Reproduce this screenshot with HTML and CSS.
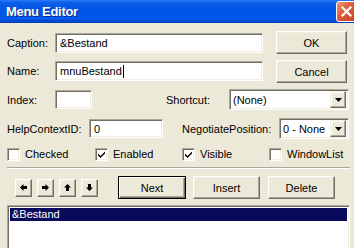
FILE: index.html
```html
<!DOCTYPE html>
<html lang="en">
<head>
    <meta charset="UTF-8">
    <title>Menu Editor</title>
    <link rel="stylesheet" href="styles.css">
</head>
<body>
    <div class="window">
        <div class="titlebar">
            <span class="title">Menu Editor</span>
            <span class="close">
                <svg width="11" height="11" viewBox="0 0 11 11"><path d="M1.5 1.5 L9.5 9.5 M9.5 1.5 L1.5 9.5" stroke="#fff" stroke-width="2.2" stroke-linecap="square"/></svg>
            </span>
        </div>

        <div class="content">
            <div class="top">
                <div class="fields">
                    <div class="row">
                        <label class="lbl w48">Caption:</label>
                        <div class="field caption">&amp;Bestand</div>
                    </div>
                    <div class="row">
                        <label class="lbl w48">Name:</label>
                        <div class="field caption">mnuBestand<span class="caret"></span></div>
                    </div>
                </div>
                <div class="side">
                    <div class="btn side-btn">OK</div>
                    <div class="btn side-btn">Cancel</div>
                </div>
            </div>

            <div class="row r3">
                <label class="lbl w48">Index:</label>
                <div class="field index"></div>
                <label class="lbl shortcut-lbl">Shortcut:</label>
                <div class="select shortcut">
                    <span class="sel-text">(None)</span>
                    <span class="drop">
                        <svg width="7" height="4" viewBox="0 0 7 4"><path d="M0 0 H7 L3.5 4 Z" fill="#000"/></svg>
                    </span>
                </div>
            </div>

            <div class="row r4">
                <label class="lbl help-lbl">HelpContextID:</label>
                <div class="field help">0</div>
                <label class="lbl nego-lbl">NegotiatePosition:</label>
                <div class="select nego">
                    <span class="sel-text">0 - None</span>
                    <span class="drop">
                        <svg width="7" height="4" viewBox="0 0 7 4"><path d="M0 0 H7 L3.5 4 Z" fill="#000"/></svg>
                    </span>
                </div>
            </div>

            <div class="checks">
                <div class="check"><span class="box"></span>Checked</div>
                <div class="check"><span class="box"><svg width="7" height="7" viewBox="0 0 7 7"><path d="M0 2.5 L2.5 5 L7 0.5 V2.5 L2.5 7 L0 4.5 Z" fill="#000"/></svg></span>Enabled</div>
                <div class="check"><span class="box"><svg width="7" height="7" viewBox="0 0 7 7"><path d="M0 2.5 L2.5 5 L7 0.5 V2.5 L2.5 7 L0 4.5 Z" fill="#000"/></svg></span>Visible</div>
                <div class="check"><span class="box"></span>WindowList</div>
            </div>

            <div class="separator"></div>

            <div class="actions">
                <div class="arrows">
                    <div class="btn arrow"><svg width="7" height="7" viewBox="0 0 7 7"><path d="M0 3.5 L3.5 0 V2 H7 V5 H3.5 V7 Z" fill="#000"/></svg></div>
                    <div class="btn arrow"><svg width="7" height="7" viewBox="0 0 7 7"><path d="M7 3.5 L3.5 0 V2 H0 V5 H3.5 V7 Z" fill="#000"/></svg></div>
                    <div class="btn arrow"><svg width="7" height="7" viewBox="0 0 7 7"><path d="M3.5 0 L0 3.5 H2 V7 H5 V3.5 H7 Z" fill="#000"/></svg></div>
                    <div class="btn arrow"><svg width="7" height="7" viewBox="0 0 7 7"><path d="M3.5 7 L0 3.5 H2 V0 H5 V3.5 H7 Z" fill="#000"/></svg></div>
                </div>
                <div class="btn default next">Next</div>
                <div class="btn insert">Insert</div>
                <div class="btn delete">Delete</div>
            </div>

            <div class="listbox">
                <div class="item selected">&amp;Bestand</div>
            </div>
        </div>
    </div>
</body>
</html>
```

FILE: styles.css
```css
body {
    margin: 0;
    font-family: "Liberation Sans", Arial, sans-serif;
    font-size: 11px;
    color: #000;
    background: #ece9d8;
}

.window {
    width: 354px;
    height: 248px;
    overflow: hidden;
    background: #ece9d8;
}

/* title bar */
.titlebar {
    height: 23px;
    display: flex;
    align-items: center;
    justify-content: space-between;
    overflow: hidden;
    background: linear-gradient(#2a7cf5 0, #0a5ee6 12%, #0054e3 45%, #0058ee 80%, #0048d0 92%, #003cb0 100%);
}

.title {
    margin-left: 6px;
    color: #fff;
    font-weight: bold;
    font-size: 13px;
    letter-spacing: -0.3px;
    text-shadow: 1px 1px #0a2a90;
}

.close {
    width: 19px;
    height: 19px;
    margin-right: -3px;
    border: 1px solid #fff;
    border-radius: 3px;
    display: flex;
    align-items: center;
    justify-content: center;
    background: linear-gradient(135deg, #ee9a80 0, #e0603a 40%, #c8401c 100%);
}

/* body */
.content {
    padding-left: 7px;
}

.top {
    display: flex;
    margin-top: 8px;
}

.fields {
    margin-top: 2px;
    display: flex;
    flex-direction: column;
    gap: 8px;
}

.row {
    display: flex;
    align-items: center;
}

.lbl {
    flex: none;
}

.w48 { width: 48px; }

.field {
    box-sizing: border-box;
    height: 20px;
    padding-left: 4px;
    line-height: 16px;
    background: #fff;
    border: 1px solid;
    border-color: #aca899 #fff #fff #aca899;
    box-shadow: inset 1px 1px #716f64, inset -1px -1px #f1efe2;
    display: flex;
    align-items: center;
}

.caption { width: 208px; }

.caret {
    display: inline-block;
    width: 1px;
    height: 13px;
    margin-left: 1px;
    background: #000;
}

.side {
    margin-left: 13px;
    display: flex;
    flex-direction: column;
    gap: 6px;
}

.btn {
    box-sizing: border-box;
    display: flex;
    align-items: center;
    justify-content: center;
    background: #ece9d8;
    border: 1px solid;
    border-color: #fff #716f64 #716f64 #fff;
    box-shadow: inset -1px -1px #aca899, inset 1px 1px #f1efe2;
}

.side-btn {
    width: 71px;
    height: 23px;
}

.r3 {
    margin-top: 6px;
    height: 21px;
}

.index {
    width: 37px;
    height: 19px;
}

.shortcut-lbl {
    margin-left: 74px;
    width: 63px;
}

.select {
    box-sizing: border-box;
    height: 21px;
    background: #fff;
    border: 1px solid;
    border-color: #aca899 #fff #fff #aca899;
    box-shadow: inset 1px 1px #716f64, inset -1px -1px #f1efe2;
    display: flex;
    align-items: center;
    justify-content: space-between;
    padding: 1px 2px 1px 3px;
}

.shortcut { width: 120px; }

.drop {
    box-sizing: border-box;
    width: 16px;
    height: 17px;
    display: flex;
    align-items: center;
    justify-content: center;
    background: #ece9d8;
    border: 1px solid;
    border-color: #f1efe2 #716f64 #716f64 #f1efe2;
    box-shadow: inset -1px -1px #aca899, inset 1px 1px #fff;
}

.r4 {
    margin-top: 8px;
    height: 21px;
}

.help-lbl { width: 82px; }

.help {
    width: 74px;
    height: 19px;
}

.nego-lbl {
    margin-left: 19px;
    width: 97px;
}

.nego { width: 70px; }

/* checkboxes */
.checks {
    margin-top: 8px;
    height: 14px;
    display: grid;
    grid-template-columns: 88px 87px 87px auto;
    align-items: center;
}

.check {
    display: flex;
    align-items: center;
}

.box {
    box-sizing: border-box;
    width: 13px;
    height: 13px;
    margin-right: 5px;
    background: #fff;
    border: 1px solid;
    border-color: #aca899 #fff #fff #aca899;
    box-shadow: inset 1px 1px #716f64, inset -1px -1px #f1efe2;
    display: flex;
    align-items: center;
    justify-content: center;
}

.separator {
    margin-top: 6px;
    width: 343px;
    height: 1px;
    border-top: 1px solid #aca899;
    border-bottom: 1px solid #fff;
    height: 0;
}

/* button row */
.actions {
    margin-top: 7px;
    height: 23px;
    display: flex;
    align-items: center;
}

.arrows {
    margin-left: 8px;
    display: flex;
    gap: 5px;
}

.arrow {
    width: 17px;
    height: 18px;
}

.next {
    margin-left: 20px;
    width: 68px;
    height: 23px;
}

.default {
    border: 1px solid #000;
    box-shadow: inset 1px 1px #fff, inset -1px -1px #716f64, inset -2px -2px #aca899;
}

.insert {
    margin-left: 7px;
    width: 67px;
    height: 23px;
}

.delete {
    margin-left: 8px;
    width: 67px;
    height: 23px;
}

/* list */
.listbox {
    box-sizing: border-box;
    margin-top: 6px;
    width: 343px;
    height: 60px;
    padding: 2px;
    background: #fff;
    border: 1px solid;
    border-color: #aca899 #fff #fff #aca899;
    box-shadow: inset 1px 1px #716f64, inset -1px -1px #f1efe2;
}

.item {
    height: 13px;
    line-height: 13px;
    padding-left: 2px;
}

.selected {
    background: #0a0a5c;
    color: #fff;
}
```
